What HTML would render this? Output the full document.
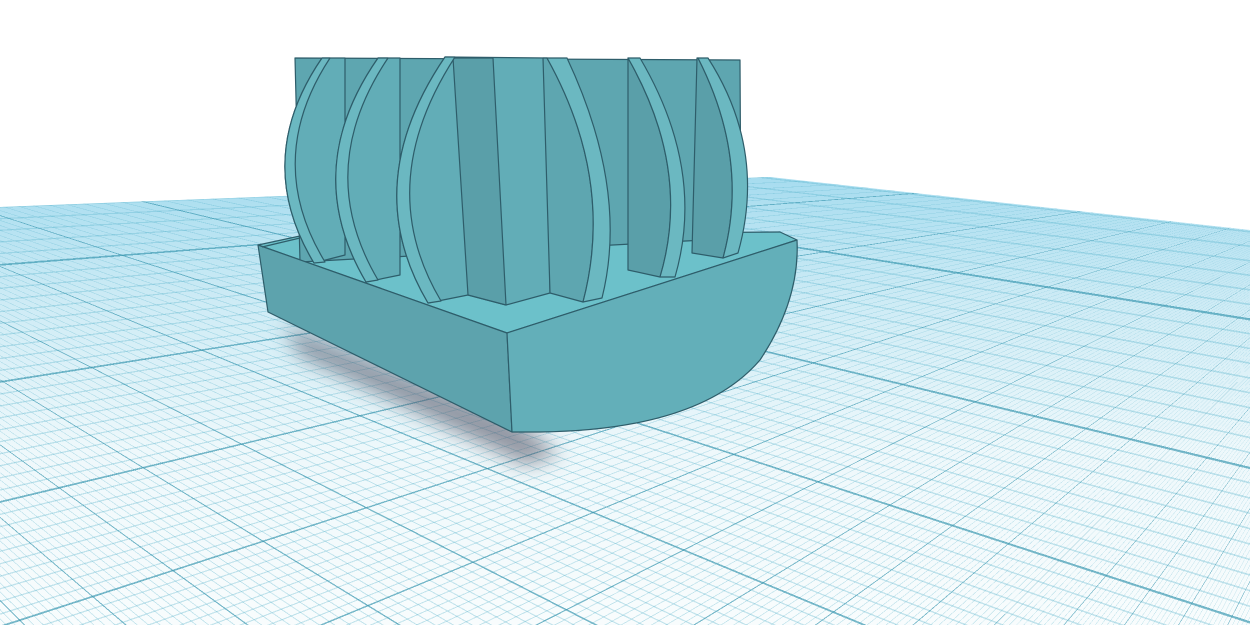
<!DOCTYPE html>
<html><head><meta charset="utf-8"><style>
html,body{margin:0;padding:0;background:#fff;width:1250px;height:625px;overflow:hidden;position:relative}
#plane{position:absolute;left:0;top:0;width:1250px;height:625px;
clip-path:polygon(0px 207px,770px 177px,1250px 230px,1250px 625px,0px 625px);
background:
repeating-conic-gradient(from 0deg at 1470px 150px, rgba(50,145,170,0.55) 0deg 0.07deg, transparent 0.07deg 4.5deg),
repeating-conic-gradient(from 0deg at -570px 30px, rgba(50,145,170,0.55) 0deg 0.07deg, transparent 0.07deg 4.5deg),
repeating-conic-gradient(from 0deg at 1470px 150px, rgba(80,175,200,0.32) 0deg 0.05deg, transparent 0.05deg 0.45deg),
repeating-conic-gradient(from 0deg at -570px 30px, rgba(80,175,200,0.32) 0deg 0.05deg, transparent 0.05deg 0.45deg),
linear-gradient(to bottom, #a6dcef 175px, #cdebf5 300px, #eef8fb 450px, #f8fcfd 625px);}
svg{position:absolute;left:0;top:0;display:block}
</style></head><body>
<div id="plane"></div>
<svg width="1250" height="625" viewBox="0 0 1250 625" xmlns="http://www.w3.org/2000/svg">
<defs>
<filter id="bl" x="-30%" y="-30%" width="160%" height="160%"><feGaussianBlur stdDeviation="10"/></filter>
</defs>
<polygon points="285,325 515,420 560,455 525,465 300,355" fill="#556" opacity="0.6" filter="url(#bl)"/>
<g stroke="#2e5d6a" stroke-width="1.2" stroke-linejoin="round">
<polygon points="258,245 300,236 780,232 797,240 507,333" fill="#6cc1ca"/>
<polygon points="295,58 740,60 741,238 300,262" fill="#5ea6b0"/>
<path d="M697,58 L698,58 Q750,160 723,258 L692,253 Z" fill="#5a9fa9"/>
<path d="M698,58 L708,58 Q767,150 738,253 L723,258 Q750,160 698,58 Z" fill="#6bb8c1"/>
<path d="M628,58 Q692,170 660,277 L628,270 Z" fill="#5a9fa9"/>
<path d="M628,58 L640,58 Q706,170 675,277 L660,277 Q692,170 628,58 Z" fill="#6bb8c1"/>
<path d="M322,58 Q252,160 314,263 L345,255 L345,58 Z" fill="#62adb7"/>
<path d="M322,58 Q252,160 314,263 L325,262 Q263,160 330,58 Z" fill="#6bb8c1"/>
<path d="M378,58 Q300,170 366,282 L400,275 L400,58 Z" fill="#62adb7"/>
<path d="M378,58 Q300,170 366,282 L378,280 Q313,170 388,58 Z" fill="#6bb8c1"/>
<path d="M445,57 L547,58 L550,293 L506,305 L468,295 L428,303 Q358,185 445,57 Z" fill="#62adb7"/>
<path d="M453,58 L493,58 L506,305 L468,295 Z" fill="#5a9fa9"/>
<path d="M445,57 Q358,185 428,303 L441,301 Q372,185 455,57 Z" fill="#6bb8c1"/>
<path d="M547,58 Q615,180 583,302 L550,293 L543,58 Z" fill="#5ea6b0"/>
<path d="M547,58 L567,58 Q629,190 602,298 L583,302 Q615,180 547,58 Z" fill="#6bb8c1"/>
<polygon points="258,245 507,333 512,432 268,312" fill="#5da3ad"/>
<path d="M507,333 L797,240 Q800,300 760,360 Q700,430 540,432 L512,432 Z" fill="#63afb9"/>
<line x1="262" y1="247" x2="300" y2="238"/>
</g>
</svg>
</body></html>
